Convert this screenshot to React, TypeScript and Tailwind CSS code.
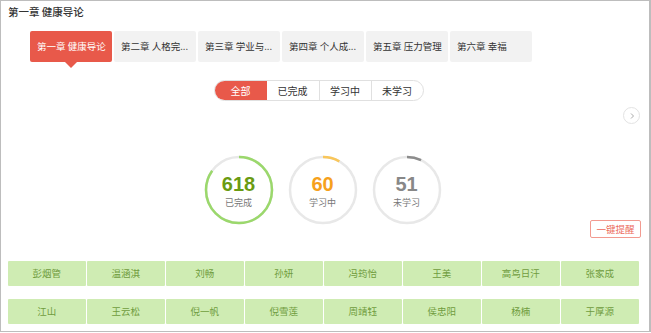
import React from "react";

const tabs = ["第一章 健康导论", "第二章 人格完...", "第三章 学业与...", "第四章 个人成...", "第五章 压力管理", "第六章 幸福"];
const filters = ["全部", "已完成", "学习中", "未学习"];
const row1 = ["彭烟管", "温涵淇", "刘畅", "孙妍", "冯筠怡", "王美", "高鸟日汗", "张家成"];
const row2 = ["江山", "王云松", "倪一帆", "倪雪莲", "周靖钰", "侯忠阳", "杨楠", "于厚源"];

function Ring({ value, total, arc, num, label, numColor }: { value: number; total: number; arc: string; num: string; label: string; numColor: string }) {
  const r = 33;
  const c = 2 * Math.PI * r;
  const frac = value / total;
  return (
    <div className="relative w-[70px] h-[70px]">
      <svg width="70" height="70" viewBox="0 0 70 70" className="absolute inset-0">
        <circle cx="35" cy="35" r={r} fill="none" stroke="#e8e8e8" strokeWidth="2.5" />
        <circle
          cx="35"
          cy="35"
          r={r}
          fill="none"
          stroke={arc}
          strokeWidth="2.5"
          strokeDasharray={`${c * frac} ${c}`}
          transform="rotate(-90 35 35)"
        />
      </svg>
      <div className="absolute inset-0 flex flex-col items-center justify-center pt-[1px]">
        <div className={`text-[20px] leading-[20px] font-semibold ${numColor}`} style={{ fontFamily: "'Liberation Sans', Arial, sans-serif" }}>{num}</div>
        <div className="text-[9px] leading-[10px] text-[#777] mt-[4px]">{label}</div>
      </div>
    </div>
  );
}

export default function App() {
  return (
    <div className="w-[651px] h-[333px] bg-white" style={{ fontFamily: "'Noto Sans CJK SC', 'Noto Sans', sans-serif" }}>
      <div className="w-[651px] h-[332px] border border-[#bdbdbd] border-r-2 flex flex-col">
        <div className="pl-[7px] pt-[4px] text-[10.5px] leading-[14px] font-medium text-[#333]">第一章 健康导论</div>
        <div className="flex gap-[2px] pl-[29px] mt-[12px]">
          {tabs.map((t, i) => (
            <div
              key={t}
              className={`relative w-[82px] h-[31px] rounded-[2px] flex items-center pl-[7px] text-[9.5px] ${i === 0 ? "bg-[#e8594a] text-white" : "bg-[#f2f2f2] text-[#333]"}`}
            >
              {t}
              {i === 0 && (
                <div className="absolute left-[35px] top-[31px] w-0 h-0 border-l-[6px] border-r-[6px] border-t-[6px] border-l-transparent border-r-transparent border-t-[#e8594a]" />
              )}
            </div>
          ))}
        </div>
        <div className="flex justify-center mt-[18px] pr-[13px]">
          <div className="flex h-[21px] border border-[#e0e0e0] rounded-full overflow-hidden">
            {filters.map((f, i) => (
              <div
                key={f}
                className={`w-[52px] flex items-center justify-center text-[10px] ${i === 0 ? "bg-[#e8594a] text-white" : "text-[#333] border-l border-[#e0e0e0]"} ${i === 1 ? "border-l-0" : ""}`}
              >
                {f}
              </div>
            ))}
          </div>
        </div>
        <div className="relative h-[0px]">
          <div className="absolute right-[9px] top-[6px] w-[17px] h-[17px] rounded-full border border-[#e3e3e3] flex items-center justify-center">
            <svg width="8" height="8" viewBox="0 0 8 8"><path d="M3 1.5 L5.5 4 L3 6.5" fill="none" stroke="#aaa" strokeWidth="1" /></svg>
          </div>
        </div>
        <div className="flex justify-center gap-[14px] mt-[54px] pr-[5px]">
          <Ring value={618} total={729} arc="#9bd86c" num="618" label="已完成" numColor="text-[#6a9b12]" />
          <Ring value={60} total={729} arc="#f9c65a" num="60" label="学习中" numColor="text-[#f6a11c]" />
          <Ring value={51} total={729} arc="#8c8c8c" num="51" label="未学习" numColor="text-[#888]" />
        </div>
        <div className="flex justify-end pr-[8px] mt-[-5px]">
          <div className="w-[51px] h-[18px] border border-[#f29a90] rounded-[2px] text-[#ec6a5c] text-[9.5px] flex items-center justify-center">一键提醒</div>
        </div>
        <div className="flex flex-col gap-[13px] pl-[7px] mt-[23px]">
          {[row1, row2].map((row, ri) => (
            <div key={ri} className="flex gap-[1.5px]">
              {row.map((n) => (
                <div key={n} className="w-[77.5px] h-[25px] bg-[#cfecb3] rounded-[1px] flex items-center justify-center text-[9.5px] text-[#6f9c3e]">{n}</div>
              ))}
            </div>
          ))}
        </div>
      </div>
    </div>
  );
}
